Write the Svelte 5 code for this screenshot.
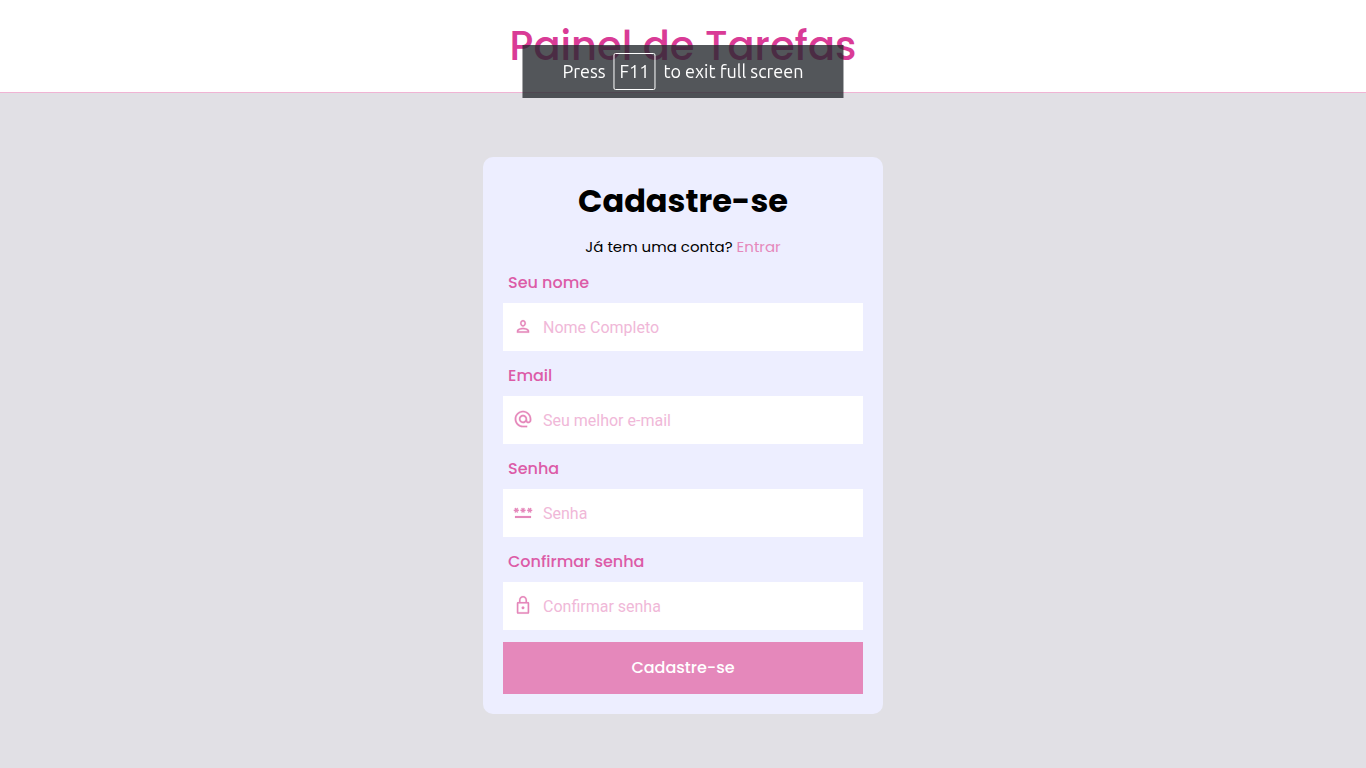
<script>
  const fields = [
    { id: 'name', label: 'Seu nome', type: 'text', placeholder: 'Nome Completo', icon: 'person' },
    { id: 'email', label: 'Email', type: 'email', placeholder: 'Seu melhor e-mail', icon: 'at' },
    { id: 'password', label: 'Senha', type: 'password', placeholder: 'Senha', icon: 'password' },
    { id: 'confirm', label: 'Confirmar senha', type: 'password', placeholder: 'Confirmar senha', icon: 'lock' }
  ];

  const icons = {
    person:
      'M12 4.8c-1.95 0-3.5 1.8-3.5 4s1.55 4 3.5 4 3.5-1.8 3.5-4-1.55-4-3.5-4zm0 1.8c1 0 1.7 1 1.7 2.2s-.7 2.2-1.7 2.2-1.7-1-1.7-2.2.7-2.2 1.7-2.2zM12 14.2c-2.67 0-7.4 1.2-7.4 3.8v2.2h14.8V18c0-2.6-4.73-3.8-7.4-3.8zm0 1.8c2.5 0 5.4 1 5.6 2.4H6.4C6.6 17 9.5 16 12 16z',
    at: 'M12 2C6.48 2 2 6.48 2 12s4.48 10 10 10h5v-2h-5c-4.34 0-8-3.66-8-8s3.66-8 8-8 8 3.66 8 8v1.43c0 .79-.71 1.57-1.5 1.57s-1.5-.78-1.5-1.57V12c0-2.76-2.24-5-5-5s-5 2.24-5 5 2.24 5 5 5c1.38 0 2.64-.56 3.54-1.47.65.89 1.77 1.47 2.96 1.47 1.97 0 3.5-1.6 3.5-3.57V12c0-5.52-4.48-10-10-10zm0 13c-1.66 0-3-1.34-3-3s1.34-3 3-3 3 1.34 3 3-1.34 3-3 3z',
    password:
      'M2.4 16.9h19.2v2.2H2.4zM3.15 12.95 4 11.47l.85 1.48 1.3-.75-.85-1.48H7v-1.5H5.3l.85-1.47L4.85 7 4 8.47 3.15 7l-1.3.75.85 1.47H1v1.5h1.7l-.85 1.48zM9.85 12.2l1.3.75.85-1.48.85 1.48 1.3-.75-.85-1.48H15v-1.5h-1.7l.85-1.47-1.3-.75L12 8.47 11.15 7l-1.3.75.85 1.47H9v1.5h1.7zM23 9.22h-1.7l.85-1.47-1.3-.75L20 8.47 19.15 7l-1.3.75.85 1.47H17v1.5h1.7l-.85 1.48 1.3.75.85-1.48.85 1.48 1.3-.75-.85-1.48H23z',
    lock: 'M18 8.4h-1.2V6.2C16.8 3.4 14.8 1.2 12 1.2S7.2 3.4 7.2 6.2v2.2H6c-.9 0-1.4.6-1.4 1.5v11c0 .9.5 1.5 1.4 1.5h12c.9 0 1.4-.6 1.4-1.5v-11c0-.9-.5-1.5-1.4-1.5zM9 6.2C9 4.3 10.3 3 12 3s3 1.3 3 3.2v2.2H9zM17.6 20.6H6.4V10.2h11.2zM12 17.1a1.7 1.7 0 1 0 0-3.4 1.7 1.7 0 0 0 0 3.4z'
  };
</script>

<div class="page">
  <header>
    <span class="brand">Painel de Tarefas</span>
  </header>

  <main>
    <form class="card" onsubmit={(event) => event.preventDefault()}>
      <h1>Cadastre-se</h1>
      <p>Já tem uma conta? <a href="#entrar">Entrar</a></p>

      {#each fields as field}
        <div class="field">
          <label for={field.id}>{field.label}</label>
          <div class="control">
            <svg viewBox="0 0 24 24" aria-hidden="true"><path d={icons[field.icon]} /></svg>
            <input id={field.id} type={field.type} placeholder={field.placeholder} />
          </div>
        </div>
      {/each}

      <button type="submit">Cadastre-se</button>
    </form>
  </main>

  <div class="notice" role="status">
    <span>Press</span>
    <kbd>F11</kbd>
    <span>to exit full screen</span>
  </div>
</div>

<style>
  :global(body) {
    margin: 0;
    background: #e1e0e5;
  }

  .page {
    min-height: 100vh;
    font-family: Poppins, Inter, sans-serif;
    color: #000;
  }

  .page,
  .page * {
    box-sizing: border-box;
  }

  header {
    display: flex;
    justify-content: center;
    padding: 14px 20px;
    background: #fff;
    border-bottom: 1px solid #f0b4d4;
  }

  .brand {
    font-size: 40px;
    font-weight: 500;
    line-height: 64px;
    color: #d93b96;
  }

  main {
    display: flex;
    justify-content: center;
    padding: 64px 20px 54px;
  }

  .card {
    display: flex;
    flex-direction: column;
    gap: 12px;
    width: 100%;
    max-width: 400px;
    padding: 20px;
    border-radius: 10px;
    background: #edeeff;
  }

  h1 {
    margin: 0;
    font-size: 32px;
    font-weight: 700;
    line-height: 48px;
    text-align: center;
  }

  p {
    margin: 0;
    padding-bottom: 2px;
    font-size: 15px;
    line-height: 19px;
    text-align: center;
  }

  a {
    color: #e588bb;
    text-decoration: none;
  }

  .field {
    display: flex;
    flex-direction: column;
    gap: 8px;
  }

  label {
    padding-left: 5px;
    font-size: 16px;
    font-weight: 500;
    line-height: 25px;
    color: #dc5ba7;
  }

  .control {
    display: flex;
    align-items: center;
    gap: 10px;
    height: 48px;
    padding: 0 10px;
    background: #fff;
  }

  svg {
    flex: none;
    width: 20px;
    height: 20px;
    margin-bottom: 2px;
    fill: #e588bb;
    fill-rule: evenodd;
    stroke: #e588bb;
    stroke-width: 0.2;
  }

  input {
    flex: 1;
    min-width: 0;
    height: 100%;
    padding: 0;
    border: 0;
    outline: 0;
    background: transparent;
    font-family: Roboto, sans-serif;
    font-size: 16px;
    color: #d93b96;
  }

  input::placeholder {
    color: #f0b8d8;
    opacity: 1;
  }

  button {
    height: 52px;
    padding: 0 0 2px;
    border: 0;
    background: #e588bb;
    font-family: inherit;
    font-size: 16px;
    font-weight: 500;
    color: #fff;
    cursor: pointer;
  }

  .notice {
    position: fixed;
    top: 45px;
    left: 50%;
    transform: translateX(-50%);
    display: flex;
    align-items: center;
    gap: 8px;
    height: 53px;
    padding: 0 40px;
    background: rgba(37, 41, 46, 0.79);
    font-family: Ubuntu, "Noto Sans", sans-serif;
    font-size: 18px;
    line-height: 35px;
    color: #fff;
    white-space: nowrap;
  }

  kbd {
    padding: 0 5px;
    border: 1px solid #fff;
    border-radius: 2px;
    font: inherit;
  }
</style>
